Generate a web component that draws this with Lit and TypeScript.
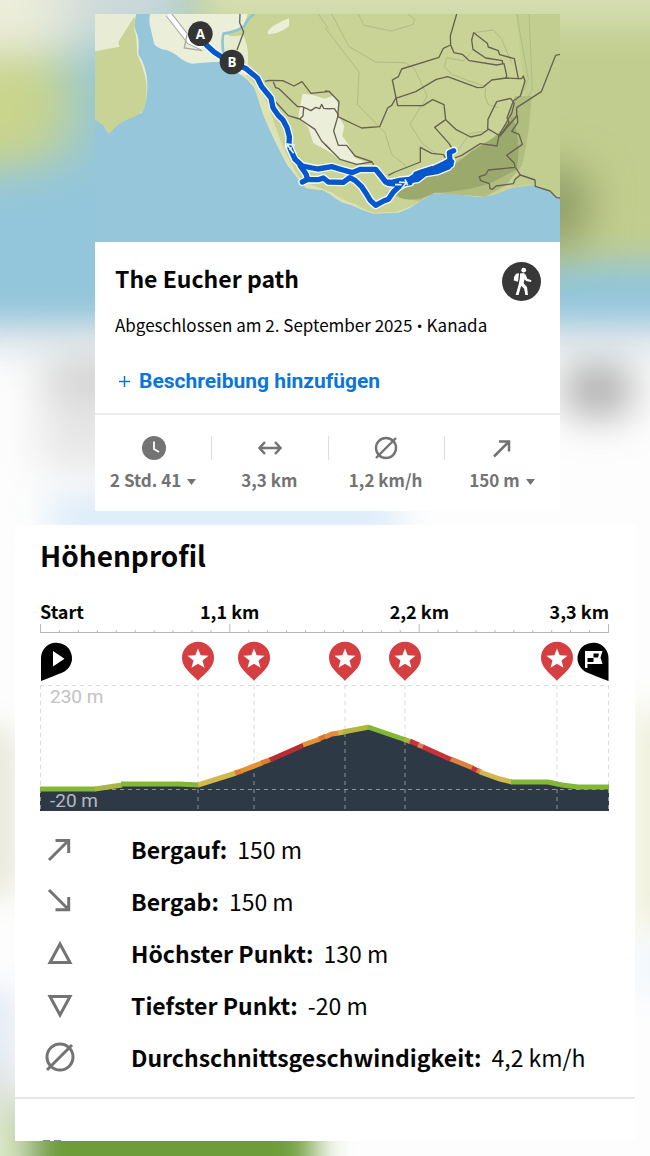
import { LitElement, html, svg, css } from "lit";
import { customElement } from "lit/decorators.js";

const PINS = [158, 214, 305, 365, 517];

const SLOPES: Array<[string, string]> = [
  ["#83b735", "0,167 56,167"],
  ["#a9b545", "55,167 82,163"],
  ["#83b735", "81,162 138,162 159,163"],
  ["#d0b84a", "158,163 196,151"],
  ["#dd7f2d", "195,151 202,149"],
  ["#e59233", "201,149 222,141"],
  ["#dd7f2d", "221,141 232,137"],
  ["#b92c33", "230,138 264,123"],
  ["#e59233", "263,123 280,117"],
  ["#dd7233", "279,117 286,114"],
  ["#e58a3a", "285,115 292,112 299,111"],
  ["#d0b84a", "298,111 304,110"],
  ["#b3b63d", "303,110 329,105"],
  ["#83b735", "328,105 366,118"],
  ["#a9b535", "364,117 371,120"],
  ["#c83238", "370,119 379,123"],
  ["#dd7f5d", "378,123 384,125"],
  ["#c83238", "383,125 412,138"],
  ["#dd8440", "411,137 433,146"],
  ["#c83238", "432,146 438,149"],
  ["#dd8440", "437,148 441,150"],
  ["#d0b84a", "440,150 460,157 472,160"],
  ["#83b735", "471,160 508,160 522,163 538,165 569,165"],
];

const upArrow = svg`<path d="M5 27 24.500 7.500M11.500 7.500H24.700V20" fill="none" stroke="currentColor" stroke-width="3"/>`;
const average = svg`<circle cx="16" cy="16" r="13" fill="none" stroke="currentColor" stroke-width="3"/><path d="M3 29 28 4" stroke="currentColor" stroke-width="3"/>`;

const DETAILS = [
  { label: "Bergauf:", value: "150 m", icon: upArrow },
  {
    label: "Bergab:",
    value: "150 m",
    icon: svg`<path d="M5 5 24.500 24.500M11.500 24.700H24.700V12" fill="none" stroke="currentColor" stroke-width="3"/>`,
  },
  {
    label: "Höchster Punkt:",
    value: "130 m",
    icon: svg`<path d="M16 7 26 25.500H6Z" fill="none" stroke="currentColor" stroke-width="3"/>`,
  },
  {
    label: "Tiefster Punkt:",
    value: "-20 m",
    icon: svg`<path d="M16 26 26 7.500H6Z" fill="none" stroke="currentColor" stroke-width="3"/>`,
  },
  { label: "Durchschnittsgeschwindigkeit:", value: "4,2 km/h", icon: average },
];

@customElement("blurred-backdrop")
export class BlurredBackdrop extends LitElement {
  static styles = css`
    :host { display: block; }
    svg { display: block; width: 100%; height: 100%; }
  `;

  render() {
    return html`<svg viewBox="0 0 650 1156" preserveAspectRatio="none" aria-hidden="true">
      <defs>
        <filter id="soft" x="-20%" y="-20%" width="140%" height="140%"><feGaussianBlur stdDeviation="17"/></filter>
        <filter id="wide" x="-50%" y="-50%" width="200%" height="200%"><feGaussianBlur stdDeviation="22"/></filter>
        <filter id="far" x="-50%" y="-50%" width="200%" height="200%"><feGaussianBlur stdDeviation="28 20"/></filter>
      </defs>
      <rect width="650" height="1156" fill="#fdfdfd"/>
      <g filter="url(#soft)">
        <rect x="-60" y="-60" width="770" height="388" fill="#93c6da"/>
        <rect x="-60" y="330" width="770" height="30" fill="#e9edef"/>
      </g>
      <g filter="url(#far)">
        <path d="M-90-90H130V40L60 50-90 55Z" fill="#ecedda"/>
        <path d="M60-90H190V40H65Z" fill="#ccd9d8"/>
        <path d="M-90 52H66Q84 110 60 160L-90 182Z" fill="#c9d48c"/>
      </g>
      <g filter="url(#soft)">
        <path d="M190-60H710V262H540L400 200 190 60Z" fill="#c1cd8e"/>
        <path d="M200-60H710V26H200Z" fill="#d6deb0"/>
      </g>
      <g filter="url(#wide)">
        <path d="M530 160 590 180 580 245H530Z" fill="#8a9862"/>
        <rect x="45" y="360" width="100" height="32" fill="#c6c6c6"/>
        <rect x="40" y="392" width="90" height="80" fill="#e6e6e6"/>
        <ellipse cx="598" cy="390" rx="36" ry="24" fill="#979797"/>
      </g>
      <g filter="url(#soft)">
        <rect x="50" y="500" width="350" height="34" fill="#d3e7f8"/>
        <rect x="-40" y="730" width="56" height="165" fill="#e6e6d6"/>
        <rect x="-40" y="990" width="60" height="80" fill="#e4eaf5"/>
        <rect x="-40" y="1070" width="60" height="50" fill="#dde1dc"/>
        <rect x="-40" y="1110" width="80" height="80" fill="#d9e7c5"/>
        <rect x="630" y="710" width="60" height="220" fill="#f0f0dd"/>
        <rect x="630" y="945" width="60" height="50" fill="#f1f7fd"/>
        <rect x="28" y="1100" width="286" height="110" fill="#6e9c38"/>
      </g>
    </svg>`;
  }
}

@customElement("route-map")
export class RouteMap extends LitElement {
  static styles = css`
    :host { display: block; }
    svg { display: block; width: 100%; height: auto; }
    .path { fill: none; stroke: #676250; stroke-width: 4; stroke-linejoin: round; }
    .contour { fill: none; stroke: #b0bb89; stroke-width: 3; }
    .casing { fill: none; stroke: #f4fbff; stroke-width: 24; stroke-linejoin: round; stroke-linecap: round; }
    .track { fill: none; stroke: #0757cc; stroke-width: 16; stroke-linejoin: round; stroke-linecap: round; }
    .marker { font: bold 40px "Open Sans", "Noto Sans", sans-serif; fill: #fff; text-anchor: middle; }
  `;

  render() {
    const routes = [
      "M316 104 335 138 357 158 385 176 411 188 453 208 487 236 500 262 528 296 534 325 549 347 564 362 576 385 583 412 582 440 600 480 622 500 668 509 710 502 744 512 772 520 795 510 842 510 858 530 872 548 890 549 915 543 945 540 975 520 1010 510 1040 497 1065 483 1063 460 1076 454",
      "M616 500 633 524 638 540 622 548M634 541 670 541 685 536 700 548 745 549 764 535 780 543 800 562 812 580 826 603 842 618 866 605 880 600 895 578 912 562 945 544 968 540 990 523 1025 517 1060 503 1070 487M1040 497 1060 490 1068 496M963 524 1010 508M880 552 915 556 945 550",
    ];
    return html`<svg viewBox="0 44 1395 684" role="img" aria-label="Karte">
      <rect y="44" width="1395" height="684" fill="#95c6da"/>
      <path d="M0 44H124Q116 70 122 95 134 112 130 165 152 195 157 248 160 300 140 342L0 345Z" fill="#e9ecd4"/>
      <path d="M118 52Q122 66 118 92 126 110 126 165 144 200 154 248 158 305 146 332 132 348 100 360 70 372 56 390L42 404Q32 396 26 380L0 360V156L74 142 70 128Z" fill="#c8d395"/>
      <path d="M165 44Q160 66 168 92L178 136Q195 150 215 152 240 162 252 174 272 190 290 193L352 188 398 188 430 222 455 235 550 150V44Z" fill="#ebeed8"/>
      <path d="M430 222 455 240 478 266Q490 300 502 340 530 410 575 495L610 540 632 566Q664 572 680 572 702 582 712 590 735 610 770 618 800 634 835 643L910 640Q950 628 985 598L1015 582 1070 583 1160 594Q1200 584 1250 566L1310 554 1340 562 1395 596V300H700Z" fill="#dde2b5"/>
      <path d="M458 44H1395V596L1350 572 1318 558 1250 565Q1200 592 1160 592L1070 582 1010 584Q960 622 900 638L838 640Q800 630 780 614 740 602 712 580 660 560 622 548 575 480 540 380 520 310 493 265L455 230 459 180Q460 140 446 113L410 112 390 104 445 88Z" fill="#c8d395"/>
      <path d="M390 112 445 108Q458 130 458 180L450 216 420 208 386 158Z" fill="#e6ebcf"/>
      <path d="M480 44Q462 50 448 80 430 96 386 103 378 120 388 180" fill="none" stroke="#8fc5cf" stroke-width="8"/>
      <path d="M517 98Q530 76 582 57V80Q558 102 520 105Z" fill="#ebeed8"/>
      <path d="M622 283 650 286 690 298 718 288 732 320 732 350 748 380 742 410 760 435 780 475 820 492 790 495 742 485 690 450 655 432 640 385 610 352Z" fill="#ebeed8"/>
      <g transform="translate(690 0)">
        <path d="M575 44H705V594L660 570 620 555Q590 555 560 565 600 500 600 300Z" fill="#c2ce8f"/>
        <path d="M620 290Q612 420 590 500L540 560 480 592 320 580 285 604 238 600 180 580 260 556 370 505 400 480 470 450 540 380 570 290Z" fill="#b1bd7f"/>
        <path d="M562 350Q590 430 575 510L500 550Q430 575 330 580 270 610 225 595L205 575 385 500 440 455 530 400Z" fill="#9ca96d"/>
        <g class="contour">
          <path d="M0 85 102 218 97 315 180 400 200 465 245 502M20 44 72 142 152 188 240 190 268 208 307 290 255 375 290 430 335 465M100 44 117 78 200 95 265 75 268 58 250 46M440 160 415 185 365 175 358 202 380 225 480 262 493 250M445 100 505 92 530 120 560 190M390 465 435 402 490 395M575 44 610 240 590 285M612 44 622 270 605 300M482 265 480 290 490 316 520 325"/>
          <path d="M-20 44 10 88"/>
        </g>
        <g class="path">
          <path d="M395 44 376 110 377 137 387 160 412 165 433 184 515 197 537 193 545 228 543 238"/>
          <path d="M377 137 355 147 342 174 230 209 220 232 202 242 218 319H294L323 301 357 316 362 361 329 384 372 432 388 460"/>
          <path d="M0 275 12 276 42 307 38 352 110 386 164 382 188 326 200 318 212 297 272 277 334 240 368 232 457 265 474 264 500 242 543 236 580 238 568 178 524 166 520 154 490 143 487 132 446 100 440 122 444 150 482 176 532 184 533 194"/>
          <path d="M580 238 590 238 595 230 600 245 586 290 565 305 546 355 552 370 525 410 488 388 489 360 515 307 557 297 568 312 560 342 522 408 516 440 466 433 410 468 390 476"/>
          <path d="M362 361 392 390 437 413 468 406 490 390M705 165 692 168 649 277 575 325 575 350 525 410M577 348 578 370 560 396 582 405 592 435 545 468 568 492 570 504 490 512 482 526 463 532 467 544 493 553 495 568 503 570 513 560 565 553 570 540 586 527 630 542 631 561 675 575 695 595 705 596"/>
          <path d="M190 528 210 518 286 488V444L320 462 355 466 362 476M572 505 586 527M0 328H28L40 346 26 395 40 438 65 438 90 470 140 487 146 496M0 435 45 480 95 495 140 488"/>
        </g>
      </g>
      <path class="path" d="M435 44 434 70 446 98 426 152M510 246 522 243 563 244 597 260 621 247 648 282 705 276M535 248 542 265 552 268 608 322 622 322 648 334 662 324 674 328 680 315 686 327 705 328M626 325 624 350 614 359 580 349 542 308M614 359 660 390 680 425 705 450"/>
      <path d="M220 44 284 126 322 144" fill="none" stroke="#a5a5a1" stroke-width="20"/>
      <path d="M220 44 284 126 322 144" fill="none" stroke="#fff" stroke-width="14"/>
      <path d="M276 106 268 146 322 154" fill="none" stroke="#a9a9a3" stroke-width="4"/>
      ${routes.map((d) => svg`<path class="casing" d=${d}/>`)}
      ${routes.map((d) => svg`<path class="track" d=${d}/>`)}
      <path d="M574 450 576 434 600 438M577 436 596 462M584 452 590 444" fill="none" stroke="#dff1ff" stroke-width="5"/>
      <path d="M912 548 934 550 920 568M930 540 938 558M900 556 920 556" fill="none" stroke="#dff1ff" stroke-width="5"/>
      <circle cx="316" cy="103" r="37" fill="#343434"/>
      <circle cx="411" cy="188" r="37" fill="#343434"/>
      <text class="marker" x="316" y="118">A</text>
      <text class="marker" x="411" y="203">B</text>
    </svg>`;
  }
}

@customElement("elevation-chart")
export class ElevationChart extends LitElement {
  static styles = css`
    :host { display: block; }
    .scale {
      display: grid;
      grid-template-columns: 1fr 2fr 2fr 1fr;
      margin-bottom: 1px;
      font-size: 18px;
      line-height: 20px;
      font-weight: 700;
      text-align: center;
      white-space: nowrap;
    }
    .first { text-align: left; }
    .last { justify-self: end; }
    svg { display: block; width: 100%; height: auto; }
    .ruler { fill: none; stroke: #b9b9b9; stroke-width: 1; }
    .grid { fill: none; stroke: #dadada; stroke-width: 1; stroke-dasharray: 4 4; }
    .grid-dark { fill: none; stroke: #8c939b; stroke-width: 1; stroke-dasharray: 4 4; }
    .slope { fill: none; stroke-width: 5; }
    .level { font: 19px Roboto, sans-serif; fill: #c2c2c2; }
    .level-dark { fill: #b5bac0; }
  `;

  render() {
    const ticks = Array.from({ length: 31 }, (_, i) => {
      const x = 0.5 + (i * 568) / 30;
      return `M${x} 10V${i % 10 === 0 ? 2 : 8}`;
    }).join("");
    const ground =
      "M0 167H56L82 163 138 162 158 163 196 151 230 138 264 123 295 111 329 105 366 118 411 137 440 150 472 160H508L522 163 538 165H569V189H0Z";
    return html`
      <div class="scale">
        <span class="first">Start</span><span>1,1 km</span><span>2,2 km</span><span class="last">3,3 km</span>
      </div>
      <svg viewBox="0 0 569 189" role="img" aria-label="Höhenprofil">
        <defs><clipPath id="ground"><path d=${ground}/></clipPath></defs>
        <path class="ruler" d=${`M0 10.5H569${ticks}`}/>
        <path class="grid" d=${`M0 63.500H569M.5 63V189M568.500 63V189${PINS.map((x) => `M${x} 63V189`).join("")}`}/>
        <path d=${ground} fill="#2e3946"/>
        <g clip-path="url(#ground)">
          <path class="grid-dark" d=${`M0 167.500H569M.5 63V189M568.500 63V189${PINS.map((x) => `M${x} 63V189`).join("")}`}/>
        </g>
        ${SLOPES.map(([color, points]) => svg`<polyline class="slope" points=${points} stroke=${color}/>`)}
        <path d="M1 59V36A15.500 15.500 0 1 1 22.500 50.500Q14 54 1 59Z"/>
        <path d="M13 29 24.500 36.700 13 44.500Z" fill="#fff"/>
        <path d="M568.500 59V36A15.500 15.500 0 1 0 547 50.500Q555 54 568.500 59Z"/>
        <path d="M545 29H562.500L560.500 35.500 562.500 42H547.500V46H545Z" fill="#fff"/>
        <path d="M553.500 31.500H559L558 35.500H553.500ZM547.500 36H553.500V40H547.500Z"/>
        ${PINS.map(
          (x) => svg`<g transform=${`translate(${x} 36)`}>
            <path d="M0 23C-3 18-16 11-16-.3A16 16 0 0 1 16-.3C16 11 3 18 0 23Z" fill="#d63f41"/>
            <path d="M0-9.500 2.700-2.700 10.500-2.300 4.500 2.500 6.500 9.800 0 5.800-6.500 9.800-4.500 2.500-10.500-2.300-2.700-2.700Z" fill="#fff"/>
          </g>`
        )}
        <text class="level" x="10" y="81">230 m</text>
        <text class="level level-dark" x="10" y="185">-20 m</text>
      </svg>`;
  }
}

@customElement("app-root")
export class AppRoot extends LitElement {
  static styles = css`
    :host {
      display: block;
      position: relative;
      overflow: hidden;
      box-sizing: border-box;
      min-height: 100vh;
      padding: 14px 15px 15px;
      color: #050505;
      font-family: "Noto Sans CJK SC", "Noto Sans", sans-serif;
    }
    * { box-sizing: border-box; }
    h1, h2, p, dl, dd, dt { margin: 0; }
    button { border: 0; padding: 0; background: none; font: inherit; color: inherit; cursor: pointer; }
    .backdrop { position: absolute; inset: 0; }
    .page { position: relative; display: flex; flex-direction: column; gap: 14px; }
    .card { background: #fff; }
    .tour { margin: 0 75px 0 80px; }
    .summary {
      display: flex;
      justify-content: space-between;
      align-items: flex-start;
      padding: 20px 19px 0 20px;
    }
    .name { font-size: 23px; line-height: 32px; font-weight: 700; }
    .meta { margin-top: 19px; font-size: 17px; line-height: 24px; white-space: nowrap; }
    .dot { font-family: Roboto, sans-serif; }
    .sport { display: block; flex: none; width: 39px; height: 39px; }
    .add {
      display: flex;
      align-items: center;
      gap: 8px;
      margin: 31px 0 20px 23px;
      color: #0b76d8;
      font: 700 21px/24px Roboto, sans-serif;
    }
    .plus { width: 13px; height: 13px; }
    .stats {
      display: grid;
      grid-template-columns: repeat(4, 1fr);
      padding: 21px 0 19px;
      border-top: 2px solid #ececec;
      color: #737373;
    }
    .stat { display: flex; flex-direction: column; gap: 8px; }
    .glyph { display: flex; justify-content: center; height: 24px; border-left: 1px solid #dedede; }
    .stat:first-child .glyph { border-left-color: transparent; }
    .glyph svg { width: 24px; height: 24px; }
    .figure {
      display: flex;
      align-items: center;
      justify-content: center;
      gap: 6px;
      font-size: 17px;
      line-height: 24px;
      font-weight: 700;
      white-space: nowrap;
    }
    .caret { width: 9px; height: 6px; margin-top: 4px; }
    .profile { padding-top: 10px; }
    .inner { padding: 0 26px 0 25px; }
    .heading { margin-bottom: 26px; font-size: 28px; line-height: 40px; font-weight: 700; }
    .details { padding: 12px 0 14px; }
    .row {
      display: grid;
      grid-template-columns: 91px auto auto 1fr;
      align-items: center;
      height: 52px;
      font-size: 23px;
      line-height: 32px;
      white-space: nowrap;
    }
    .row-icon { display: block; width: 32px; height: 32px; margin-left: 4px; color: #737373; }
    .label { font-weight: 700; }
    .value { margin-left: 10px; }
    .next { display: flex; align-items: flex-end; gap: 4px; height: 44px; padding-left: 28px; border-top: 2px solid #e6e6e6; }
    .mark { width: 7px; height: 1px; background: #8a8a8a; }
  `;

  private caret() {
    return html`<svg class="caret" viewBox="0 0 9 6" aria-hidden="true"><path d="M0 0H9L4.500 6Z" fill="currentColor"/></svg>`;
  }

  render() {
    return html`
      <blurred-backdrop class="backdrop"></blurred-backdrop>
      <main class="page">
        <article class="card tour">
          <route-map></route-map>
          <div class="summary">
            <div>
              <h1 class="name">The Eucher path</h1>
              <p class="meta">Abgeschlossen am 2. September 2025<span class="dot"> • </span>Kanada</p>
            </div>
            <svg class="sport" viewBox="0 0 39 39" role="img" aria-label="Wandern">
              <circle cx="19.500" cy="19.500" r="19.500" fill="#383838"/>
              <circle cx="21.700" cy="8.200" r="2.400" fill="#fff"/>
              <path d="M18 11.500 21.500 11 23.500 12.500 25.300 16.800 29.500 18.300 29 20 24.200 19 22.600 17.300 21.600 21.200 25 25 26 33H23.300L22.200 26.800 19.200 23.700 16.500 33H13.700L16.800 22 18 15Z" fill="#fff"/>
              <path d="M17 11.300 14 11.800Q11.500 14.500 11.800 18.500L16 19.700Z" fill="#fff"/>
            </svg>
          </div>
          <button class="add" type="button">
            <svg class="plus" viewBox="0 0 13 13" aria-hidden="true"><path d="M6.500 1V12M1 6.500H12" stroke="currentColor" stroke-width="1.500"/></svg>
            Beschreibung hinzufügen
          </button>
          <div class="stats">
            <div class="stat">
              <div class="glyph"><svg viewBox="0 0 24 24" aria-hidden="true"><circle cx="12" cy="12" r="12" fill="currentColor"/><path d="M12 5.500V13L17 16" fill="none" stroke="#fff" stroke-width="1.800"/></svg></div>
              <button class="figure" type="button">2 Std. 41 ${this.caret()}</button>
            </div>
            <div class="stat">
              <div class="glyph"><svg viewBox="0 0 24 24" aria-hidden="true"><path d="M1.500 12H22.500M7 6 1.500 12 7 18M17 6 22.500 12 17 18" fill="none" stroke="currentColor" stroke-width="2.500"/></svg></div>
              <div class="figure">3,3 km</div>
            </div>
            <div class="stat">
              <div class="glyph"><svg viewBox="0 0 24 24" aria-hidden="true"><circle cx="12" cy="12" r="10" fill="none" stroke="currentColor" stroke-width="2.400"/><path d="M2 22 22 2" stroke="currentColor" stroke-width="2.400"/></svg></div>
              <div class="figure">1,2 km/h</div>
            </div>
            <div class="stat">
              <div class="glyph"><svg viewBox="0 0 24 24" aria-hidden="true"><path d="M4 20.500 19 5.500M9 5.500H19V15.500" fill="none" stroke="currentColor" stroke-width="2.500"/></svg></div>
              <button class="figure" type="button">150 m ${this.caret()}</button>
            </div>
          </div>
        </article>
        <section class="card profile">
          <div class="inner">
            <h2 class="heading">Höhenprofil</h2>
            <elevation-chart></elevation-chart>
            <dl class="details">
              ${DETAILS.map(
                (d) => html`<div class="row">
                  <svg class="row-icon" viewBox="0 0 32 32" aria-hidden="true">${d.icon}</svg>
                  <dt class="label">${d.label}</dt>
                  <dd class="value">${d.value}</dd>
                </div>`
              )}
            </dl>
          </div>
          <div class="next"><span class="mark"></span><span class="mark"></span></div>
        </section>
      </main>`;
  }
}
